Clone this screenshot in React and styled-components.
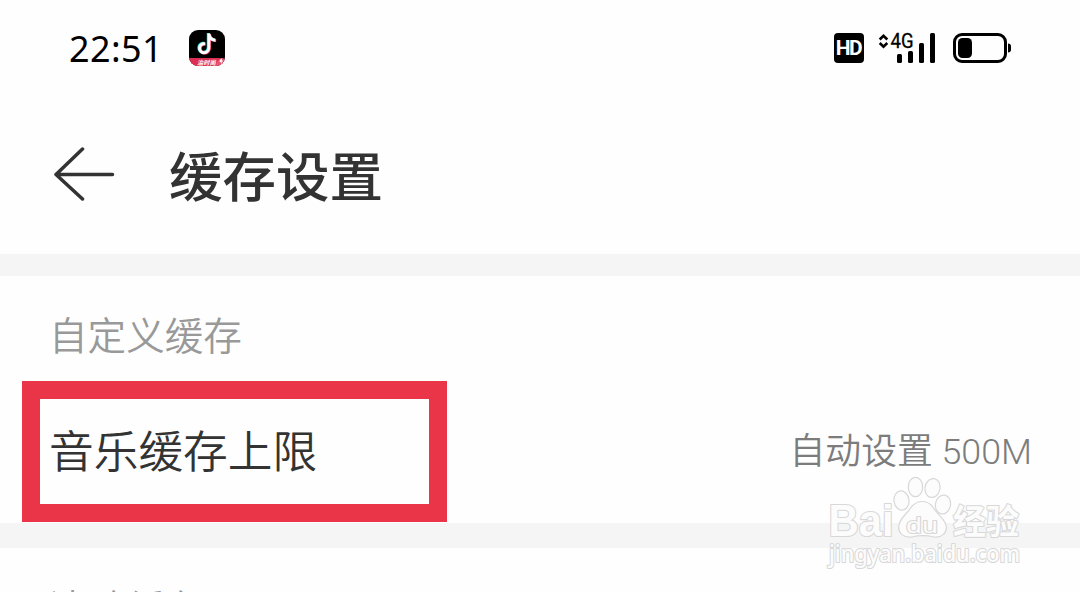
import React from 'react'

import styled, { createGlobalStyle } from 'styled-components'

const sections = [
  {
    title: '自定义缓存',
    rows: [{ label: '音乐缓存上限', value: '自动设置 500M', highlighted: true }]
  },
  { title: '清除缓存', rows: [] }
]

export default function App () {
  return <>
    <GlobalStyle />
    <Screen>
      <StatusBar />
      <Header>
        <BackIcon />
        <Title>缓存设置</Title>
      </Header>
      {
        sections.map(section => <Section key={section.title}>
          <SectionTitle>{ section.title }</SectionTitle>
          {
            section.rows.map(row => <Row key={row.label}>
              <Label>{ row.label }</Label>
              <Value>{ row.value }</Value>
              { row.highlighted && <Highlight /> }
            </Row>)
          }
        </Section>)
      }
      <Watermark />
    </Screen>
  </>
}

function StatusBar () {
  return <Status>
    <Side>
      <Time>22:51</Time>
      <TikTokIcon />
    </Side>
    <Side>
      <HdBadge>HD</HdBadge>
      <SignalIcon />
      <BatteryIcon />
    </Side>
  </Status>
}

function TikTokIcon () {
  const note = 'M17 4h2.800c.3 3 2.300 5 5.200 5.300v2.900c-2 0-3.800-.7-5.200-1.700v7.300c0 4.300-2.800 6.900-6.200 6.900-3.400 0-6-2.700-6-6 0-3.900 3.200-6.500 7-5.900v3c-2.200-.5-4 .8-4 2.900 0 1.800 1.400 3 3 3 2 0 3.400-1.400 3.400-3.700z'

  return <AppIcon viewBox='0 0 36 36'>
    <clipPath id='app-shape'>
      <rect width='36' height='36' rx='9' />
    </clipPath>
    <g clipPath='url(#app-shape)'>
      <rect width='36' height='36' fill='#000' />
      <g transform='translate(1.500 -.5)'>
        <path d={note} fill='#25e5df' transform='translate(-.7 -.4)' />
        <path d={note} fill='#f3365c' transform='translate(.7 .4)' />
        <path d={note} fill='#fff' />
      </g>
      <path d='M0 28h30l6 1v8H0z' fill='#dc2f55' />
      <path d='M26 36c2-4 3-7 7-8l3 1v7z' fill='#e85470' />
      <text x='8' y='34.600' fontSize='6.300' fontWeight='700' fontStyle='italic' fill='#fff'>治时尚</text>
      <path d='M33 28.500c-2 1-3 2.500-2 4l1.500-1-.5 3 2-4-1.300.3z' fill='#fff' />
    </g>
  </AppIcon>
}

function SignalIcon () {
  return <Signal viewBox='0 0 58 34'>
    <path d='M1.700 6.500 5.500 2.800 9.300 6.500M1.700 10 5.500 13.700 9.300 10' fill='none' stroke='#000' strokeWidth='2.600' />
    <text x='12.600' y='14.600' fontSize='20' textLength='23' lengthAdjust='spacingAndGlyphs' stroke='#000' strokeWidth='.3'>4G</text>
    <rect x='19' y='21' width='5' height='9' rx='1.500' />
    <rect x='30' y='18' width='5' height='12' rx='1.500' />
    <rect x='41' y='10' width='5' height='20' rx='1.500' />
    <rect x='52' y='0' width='5' height='30' rx='1.500' />
  </Signal>
}

function BatteryIcon () {
  return <Battery viewBox='0 0 58 30'>
    <rect x='1.500' y='1.500' width='51' height='27' rx='7.500' fill='none' stroke='#000' strokeWidth='3' />
    <rect x='5' y='5' width='14' height='20' rx='4.500' />
    <path d='M55 10.500q3 0 3 3v3q0 3-3 3z' />
  </Battery>
}

function BackIcon () {
  return <Back viewBox='0 0 62 54'>
    <path d='M29.500 2 3 27.500 29.500 52M3 27.500H59.500' />
  </Back>
}

function Watermark () {
  return <Mark viewBox='0 0 200 100'>
    <ellipse cx='90.500' cy='17' rx='7.200' ry='9.700' />
    <ellipse cx='107.500' cy='18' rx='7.500' ry='9.500' transform='rotate(12 107.500 18)' />
    <ellipse cx='76.500' cy='30.500' rx='7.500' ry='9.700' transform='rotate(-8 76.500 30.500)' />
    <ellipse cx='118' cy='34.500' rx='7.500' ry='9.500' transform='rotate(12 118 34.500)' />
    <Brand x='3.500' y='66' fontSize='43.500' textLength='65' lengthAdjust='spacingAndGlyphs'>Bai</Brand>
    <path d='M87 36c6-6 15-6 20 0 5 8 12 12 14 19 2 8-5 13-12 12-8-2-15-2-22 0-8 1-15-4-13-12 1-7 8-11 13-19z' />
    <Outlined x='81' y='62.500' fontSize='22' textLength='32' lengthAdjust='spacingAndGlyphs'>du</Outlined>
    <Outlined x='128' y='64' fontSize='34' fontWeight='700' textLength='66' lengthAdjust='spacingAndGlyphs'>经验</Outlined>
    <Outlined x='4' y='92' fontSize='23' fontWeight='500' textLength='191' lengthAdjust='spacingAndGlyphs'>jingyan.baidu.com</Outlined>
  </Mark>
}

const GlobalStyle = createGlobalStyle`
  body {
    margin: 0;
    background: #fff;
    overflow: hidden;
  }
`

const Screen = styled.main`
  position: relative;
  width: 1080px;
  height: 592px;
  overflow: hidden;
  background: #fefefe;
  color: #333;
  font-family: Roboto, 'Noto Sans CJK SC', sans-serif;
`

const Status = styled.div`
  display: flex;
  justify-content: space-between;
  height: 96px;
  padding: 0 69px;
  color: #000;
`

const Side = styled.div`
  display: flex;
  align-items: center;
  height: 96px;
`

const Time = styled.time`
  width: 120px;
  font-family: 'Noto Sans', sans-serif;
  font-size: 36px;
  letter-spacing: 0.4px;
`

const AppIcon = styled.svg`
  width: 36px;
  height: 36px;
  font-family: 'Noto Sans CJK SC', sans-serif;
`

const HdBadge = styled.span`
  width: 30px;
  height: 30px;
  margin-right: 14px;
  border-radius: 4px;
  background: #000;
  color: #fff;
  font: 700 21px/31px Roboto, sans-serif;
  letter-spacing: -1.5px;
  text-indent: -1px;
  text-align: center;
`

const Signal = styled.svg`
  width: 58px;
  height: 34px;
  margin: 4px 17px 0 0;
  overflow: visible;
`

const Battery = styled.svg`
  width: 58px;
  height: 30px;
`

const Header = styled.header`
  display: flex;
  align-items: center;
  height: 158px;
  padding-left: 53px;
  box-sizing: border-box;
`

const Back = styled.svg`
  width: 62px;
  height: 54px;
  margin-bottom: 3px;
  fill: none;
  stroke: #333;
  stroke-width: 3.5;
  stroke-linecap: round;
  stroke-linejoin: round;
`

const Title = styled.h1`
  margin: 8px 0 0 54px;
  font-size: 53.5px;
  font-weight: 500;
  line-height: 80px;
`

const Section = styled.section`
  padding: 31px 48px 0 49px;
  border-top: 22px solid #f5f5f5;

  & + & {
    border-top-width: 25px;
    padding-top: 32px;
  }
`

const SectionTitle = styled.h2`
  margin: 0;
  color: #999;
  font-size: 38.6px;
  font-weight: 350;
  line-height: 60px;
`

const Row = styled.div`
  position: relative;
  display: flex;
  align-items: center;
  justify-content: space-between;
  height: 156px;
  padding-top: 6px;
  box-sizing: border-box;
`

const Label = styled.span`
  font-size: 44.7px;
  font-weight: 350;
`

const Value = styled.span`
  color: #7c7c7c;
  font-size: 35.8px;
  font-weight: 350;
`

/* Frame drawn over the row that the reader should tap */
const Highlight = styled.i`
  position: absolute;
  top: 14px;
  left: -27px;
  width: 425px;
  height: 141px;
  border: 18px solid #ea3548;
  box-sizing: border-box;
`

const Mark = styled.svg`
  position: absolute;
  left: 825px;
  top: 470px;
  width: 200px;
  height: 100px;
  fill: #fcfcfc;
  stroke: #d8d8d8;
  stroke-width: 1.2;
  overflow: visible;
  font-family: 'Noto Sans', 'Noto Sans CJK SC', sans-serif;
`

const Outlined = styled.text`
  stroke-width: 2.2;
  stroke-linejoin: round;
  paint-order: stroke;
`

const Brand = styled(Outlined)`
  font-family: 'Liberation Sans', sans-serif;
  font-weight: 700;
`
